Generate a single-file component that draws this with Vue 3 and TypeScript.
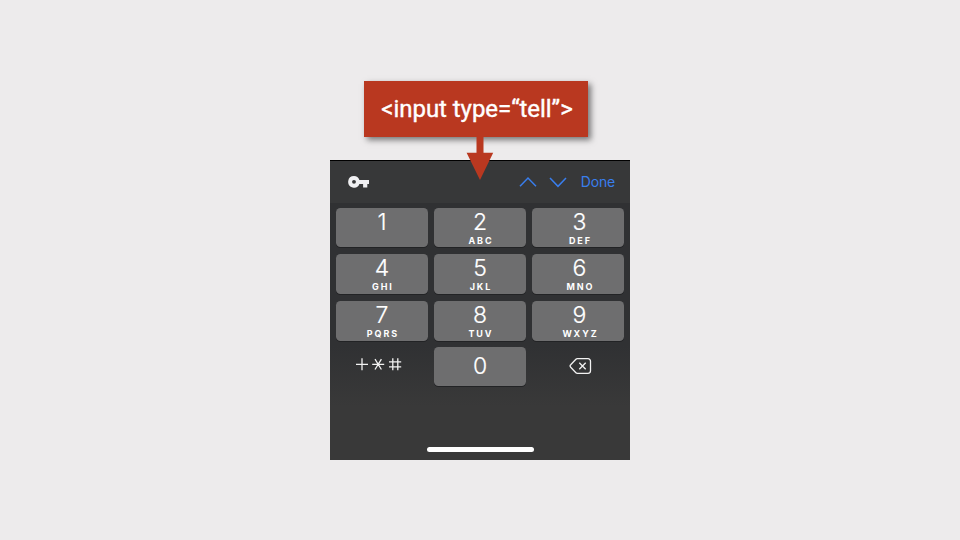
<script setup lang="ts">
interface Key {
  digit: string
  letters: string
}

const keys: Key[] = [
  { digit: '1', letters: '' },
  { digit: '2', letters: 'ABC' },
  { digit: '3', letters: 'DEF' },
  { digit: '4', letters: 'GHI' },
  { digit: '5', letters: 'JKL' },
  { digit: '6', letters: 'MNO' },
  { digit: '7', letters: 'PQRS' },
  { digit: '8', letters: 'TUV' },
  { digit: '9', letters: 'WXYZ' },
]

const label = '<input type=“tell”>'
</script>

<template>
  <main class="slide">
    <div class="callout">
      <span class="callout-text">{{ label }}</span>
      <svg class="arrow" width="28" height="46" viewBox="0 0 28 46">
        <path d="M10.5 0h7v17.7h9.7L14 45 .6 17.7h9.9z" fill="#b93820" />
      </svg>
    </div>
    <section class="keyboard">
      <header class="toolbar">
        <svg class="key-icon" width="22" height="14" viewBox="0 0 22 14">
          <path
            fill="#f0f0f2"
            fill-rule="evenodd"
            d="M6 1a5.8 5.8 0 0 1 5.4 3.9H21v4h-1.7v3.6h-4.2V8.9h-3.7A5.8 5.8 0 1 1 6 1zm0 3.9a1.95 1.95 0 1 0 0 3.9 1.95 1.95 0 0 0 0-3.9z"
          />
        </svg>
        <div class="actions">
          <svg width="18" height="12" viewBox="0 0 18 12">
            <path d="M1 10.3 9 2l8 8.3" />
          </svg>
          <svg width="18" height="12" viewBox="0 0 18 12">
            <path d="M1 2l8 8.3L17 2" />
          </svg>
          <span class="done">Done</span>
        </div>
      </header>
      <div class="pad">
        <button v-for="key in keys" :key="key.digit" class="key">
          <span class="digit">{{ key.digit }}</span>
          <span class="letters">{{ key.letters }}</span>
        </button>
        <div class="plain symbols">
          <svg width="48" height="16" viewBox="0 0 48 16">
            <path d="M1 7.3h12M7 1.3v12M17.2 7.3h12M20 2.1l6.4 10.4M26.4 2.1L20 12.5M34 4.8h12.2M34 9.8h12.2M37.8 1.3v12M42.8 1.3v12" />
          </svg>
        </div>
        <button class="key zero"><span class="digit">0</span></button>
        <div class="plain">
          <svg width="24" height="18" viewBox="0 0 24 18">
            <path d="M8.3 1.7h10.7a2.5 2.5 0 0 1 2.5 2.5v9.6a2.5 2.5 0 0 1-2.5 2.5H8.3a2 2 0 0 1-1.4-.6L1.7 10.2a1.7 1.7 0 0 1 0-2.4L6.9 2.3a2 2 0 0 1 1.4-.6zM10.3 5.7l6.4 6.6M16.7 5.7l-6.4 6.6" />
          </svg>
        </div>
      </div>
      <div class="home-bar"></div>
    </section>
  </main>
</template>

<style>
body {
  margin: 0;
  background: #edebec;
}
</style>

<style scoped>
.slide {
  box-sizing: border-box;
  width: 960px;
  height: 540px;
  padding-top: 80.5px;
  background: #edebec;
  display: flex;
  flex-direction: column;
  align-items: center;
}
.callout {
  position: relative;
  z-index: 1;
  width: 224px;
  height: 56px;
  margin: 0 8px 23.5px 0;
  flex: none;
  background: #b93820;
  box-shadow: 3px 3px 6px rgba(0, 0, 0, 0.5);
  display: flex;
  align-items: center;
  justify-content: center;
}
.callout-text {
  margin: 0 0 0 2px;
  font: 400 24px/28px Roboto, sans-serif;
  letter-spacing: -0.05px;
  color: #fff;
  -webkit-text-stroke: 0.4px #fff;
  white-space: nowrap;
}
.arrow {
  position: absolute;
  top: 54px;
  left: 102px;
}
.keyboard {
  box-sizing: border-box;
  width: 300px;
  height: 300px;
  flex: none;
  border-top: 1px solid #000;
  background: linear-gradient(#303133 0, #303133 185px, #393939 245px);
  display: flex;
  flex-direction: column;
  align-items: center;
  font-family: Inter, sans-serif;
}
.toolbar {
  box-sizing: border-box;
  width: 100%;
  height: 42px;
  padding: 0 15px 0 18px;
  background: #373839;
  display: flex;
  align-items: center;
  justify-content: space-between;
}
.actions {
  display: flex;
  align-items: center;
  gap: 12px;
}
.actions path {
  fill: none;
  stroke: #397eed;
  stroke-width: 1.5;
}
.done {
  margin-left: 2px;
  font-size: 14px;
  line-height: 18px;
  letter-spacing: -0.2px;
  color: #397eed;
}
.pad {
  width: 288px;
  margin-top: 5px;
  display: grid;
  grid-template-columns: repeat(3, 92px);
  grid-template-rows: 39px 40px 40px 39px;
  row-gap: 6.8px;
  column-gap: 6px;
}
.key {
  margin: 0;
  padding: 2.5px 0 0;
  border: 0;
  border-radius: 4.5px;
  background: #6e6e6f;
  box-shadow: 0 1px 0.5px #222325;
  color: #fff;
  font-family: inherit;
  display: flex;
  flex-direction: column;
  align-items: center;
  justify-content: flex-start;
}
.key:nth-child(3n) {
  padding-left: 3px;
}
.key:nth-child(n + 4) {
  padding-top: 3px;
}
.digit {
  font-size: 23px;
  font-weight: 300;
  line-height: 23px;
  -webkit-text-stroke: 0.2px #fff;
}
.letters {
  margin-top: 1px;
  padding-left: 1.9px;
  font-size: 9px;
  font-weight: 700;
  line-height: 11px;
  letter-spacing: 1.9px;
}
.key.zero {
  padding: 0;
  justify-content: center;
}
.plain {
  display: flex;
  align-items: center;
  justify-content: center;
  padding: 0 0 1px 5px;
}
.plain path {
  fill: none;
  stroke: #f2f2f2;
  stroke-width: 1.3;
}
.plain.symbols {
  padding: 0 6px 3px 0;
}
.home-bar {
  width: 107px;
  height: 5px;
  margin-top: auto;
  margin-bottom: 8px;
  border-radius: 3px;
  background: #fff;
}
</style>
